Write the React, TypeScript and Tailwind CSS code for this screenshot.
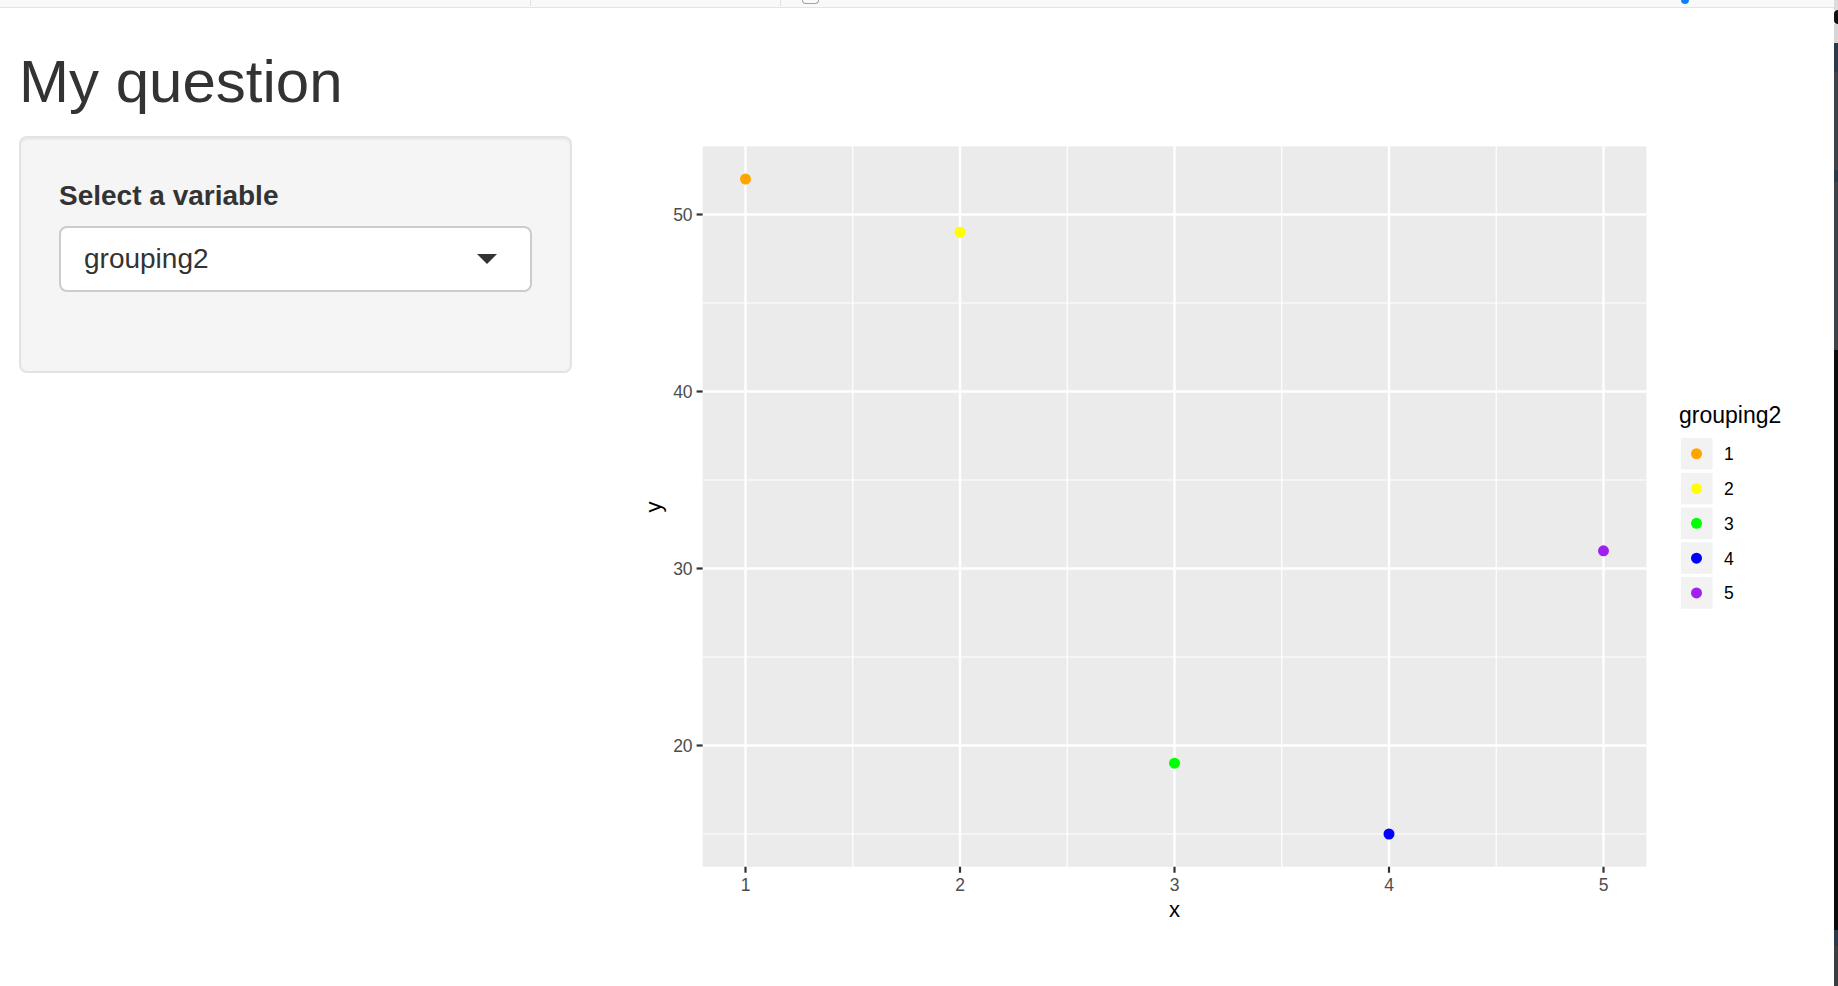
const points = [
  { x: 1, y: 52, color: '#FFA500' },
  { x: 2, y: 49, color: '#FFFF00' },
  { x: 3, y: 19, color: '#00FF00' },
  { x: 4, y: 15, color: '#0000FF' },
  { x: 5, y: 31, color: '#A020F0' }
]

// plot scales in page pixels
const X = (v: number) => 745.5 + (v - 1) * 214.5
const Y = (v: number) => 214.5 + (50 - v) * 17.7

const left = X(0.8)
const right = X(5.2)
const top = Y(53.85)
const bottom = Y(13.15)

const Plot = () => {
  return (
    <svg
      width={1214}
      height={820}
      viewBox="620 136 1214 820"
      className="ml-[48px] shrink-0"
      style={{ fontFamily: '"Liberation Sans", Arial, sans-serif' }}
    >
      <rect x={left} y={top} width={right - left} height={bottom - top} fill="#EBEBEB" />
      {[15, 25, 35, 45].map((v) => (
        <line key={'my' + v} x1={left} x2={right} y1={Y(v)} y2={Y(v)} stroke="#fff" strokeWidth={1.2} />
      ))}
      {[1.5, 2.5, 3.5, 4.5].map((v) => (
        <line key={'mx' + v} x1={X(v)} x2={X(v)} y1={top} y2={bottom} stroke="#fff" strokeWidth={1.2} />
      ))}
      {[20, 30, 40, 50].map((v) => (
        <line key={'gy' + v} x1={left} x2={right} y1={Y(v)} y2={Y(v)} stroke="#fff" strokeWidth={2.4} />
      ))}
      {[1, 2, 3, 4, 5].map((v) => (
        <line key={'gx' + v} x1={X(v)} x2={X(v)} y1={top} y2={bottom} stroke="#fff" strokeWidth={2.4} />
      ))}
      {points.map((p) => (
        <circle key={p.x} cx={X(p.x)} cy={Y(p.y)} r={5.5} fill={p.color} />
      ))}

      {/* y axis */}
      {[20, 30, 40, 50].map((v) => (
        <g key={'ty' + v}>
          <line x1={left - 6} x2={left} y1={Y(v)} y2={Y(v)} stroke="#333" strokeWidth={2.2} />
          <text x={left - 10} y={Y(v) + 6.2} textAnchor="end" fontSize={17.5} fill="#4D4D4D">
            {v}
          </text>
        </g>
      ))}
      <text x={0} y={0} transform="translate(661 507) rotate(-90)" textAnchor="middle" fontSize={22} fill="#000">
        y
      </text>

      {/* x axis */}
      {[1, 2, 3, 4, 5].map((v) => (
        <g key={'tx' + v}>
          <line x1={X(v)} x2={X(v)} y1={bottom} y2={bottom + 6} stroke="#333" strokeWidth={2.2} />
          <text x={X(v)} y={890.5} textAnchor="middle" fontSize={17.5} fill="#4D4D4D">
            {v}
          </text>
        </g>
      ))}
      <text x={X(3)} y={917} textAnchor="middle" fontSize={22} fill="#000">
        x
      </text>

      {/* legend */}
      <text x={1679} y={423} fontSize={23} fill="#000">
        grouping2
      </text>
      {points.map((p, i) => {
        const ky = 438 + i * 34.8
        return (
          <g key={'lg' + p.x}>
            <rect x={1681} y={ky} width={31.5} height={31.5} fill="#F2F2F2" />
            <circle cx={1696.5} cy={ky + 15.75} r={5.5} fill={p.color} />
            <text x={1724} y={ky + 15.75 + 6.4} fontSize={17.5} fill="#000">
              {p.x}
            </text>
          </g>
        )
      })}
    </svg>
  )
}

const App = () => {
  return (
    <div
      className="flex w-full h-[986px] bg-white overflow-hidden"
      style={{ fontFamily: '"Liberation Sans", Arial, sans-serif' }}
    >
      <div className="flex-1 flex flex-col">
        <div className="h-[8px] bg-[#f9f9fa] border-b border-[#e4e4e8] flex items-start">
          <div className="ml-[530px] w-px h-[6px] bg-[#e2e2e6]"></div>
          <div className="ml-[249px] w-px h-[6px] bg-[#e2e2e6]"></div>
          <div className="ml-[21px] w-[17px] h-[4px] border-b border-x border-[#9aa4b4] rounded-b-full"></div>
          <div className="ml-[862px] w-[8px] h-[4px] bg-[#0a84ff] rounded-b-full"></div>
        </div>

        <h1 className="ml-[19px] mt-[41px] mb-[21px] h-[66px] text-[60px] leading-[66px] font-normal text-[#333]">
          My question
        </h1>

        <div className="flex items-start ml-[19px]">
          <div className="w-[553px] h-[237px] shrink-0 bg-[#f5f5f5] border-2 border-[#e3e3e3] rounded-[8px] shadow-[inset_0_2px_2px_rgba(0,0,0,0.05)] pt-[38px] px-[38px]">
            <label className="block text-[28px] leading-[40px] font-bold text-[#333] mb-[10px]">
              Select a variable
            </label>
            <div className="h-[66px] bg-white border-2 border-[#cccccc] rounded-[8px] flex items-center pl-[23px] pr-[33px]">
              <span className="flex-1 text-[28px] leading-none text-[#333]">grouping2</span>
              <span className="w-0 h-0 border-x-[10px] border-x-transparent border-t-[10px] border-t-[#333]"></span>
            </div>
          </div>
          <Plot />
        </div>
      </div>

      <div className="w-[4px] flex flex-col">
        <div className="h-[10px] bg-[#dcdcdc]"></div>
        <div className="h-[14px] bg-[#111] rounded-l-full"></div>
        <div className="h-[19px] bg-[#d6d6d6]"></div>
        <div className="h-[29px] bg-[#2b3a4a]"></div>
        <div className="h-[98px] bg-[#3c4349]"></div>
        <div className="h-[12px] bg-[#2c3a48]"></div>
        <div className="h-[168px] bg-[#3c4349]"></div>
        <div className="h-[213px] bg-[#0b0b0b]"></div>
        <div className="h-[367px] bg-[#0a0a0a]"></div>
        <div className="h-[16px] bg-[#2b3a4a]"></div>
        <div className="flex-1 bg-[#3a3e42]"></div>
      </div>
    </div>
  )
}

export default App
